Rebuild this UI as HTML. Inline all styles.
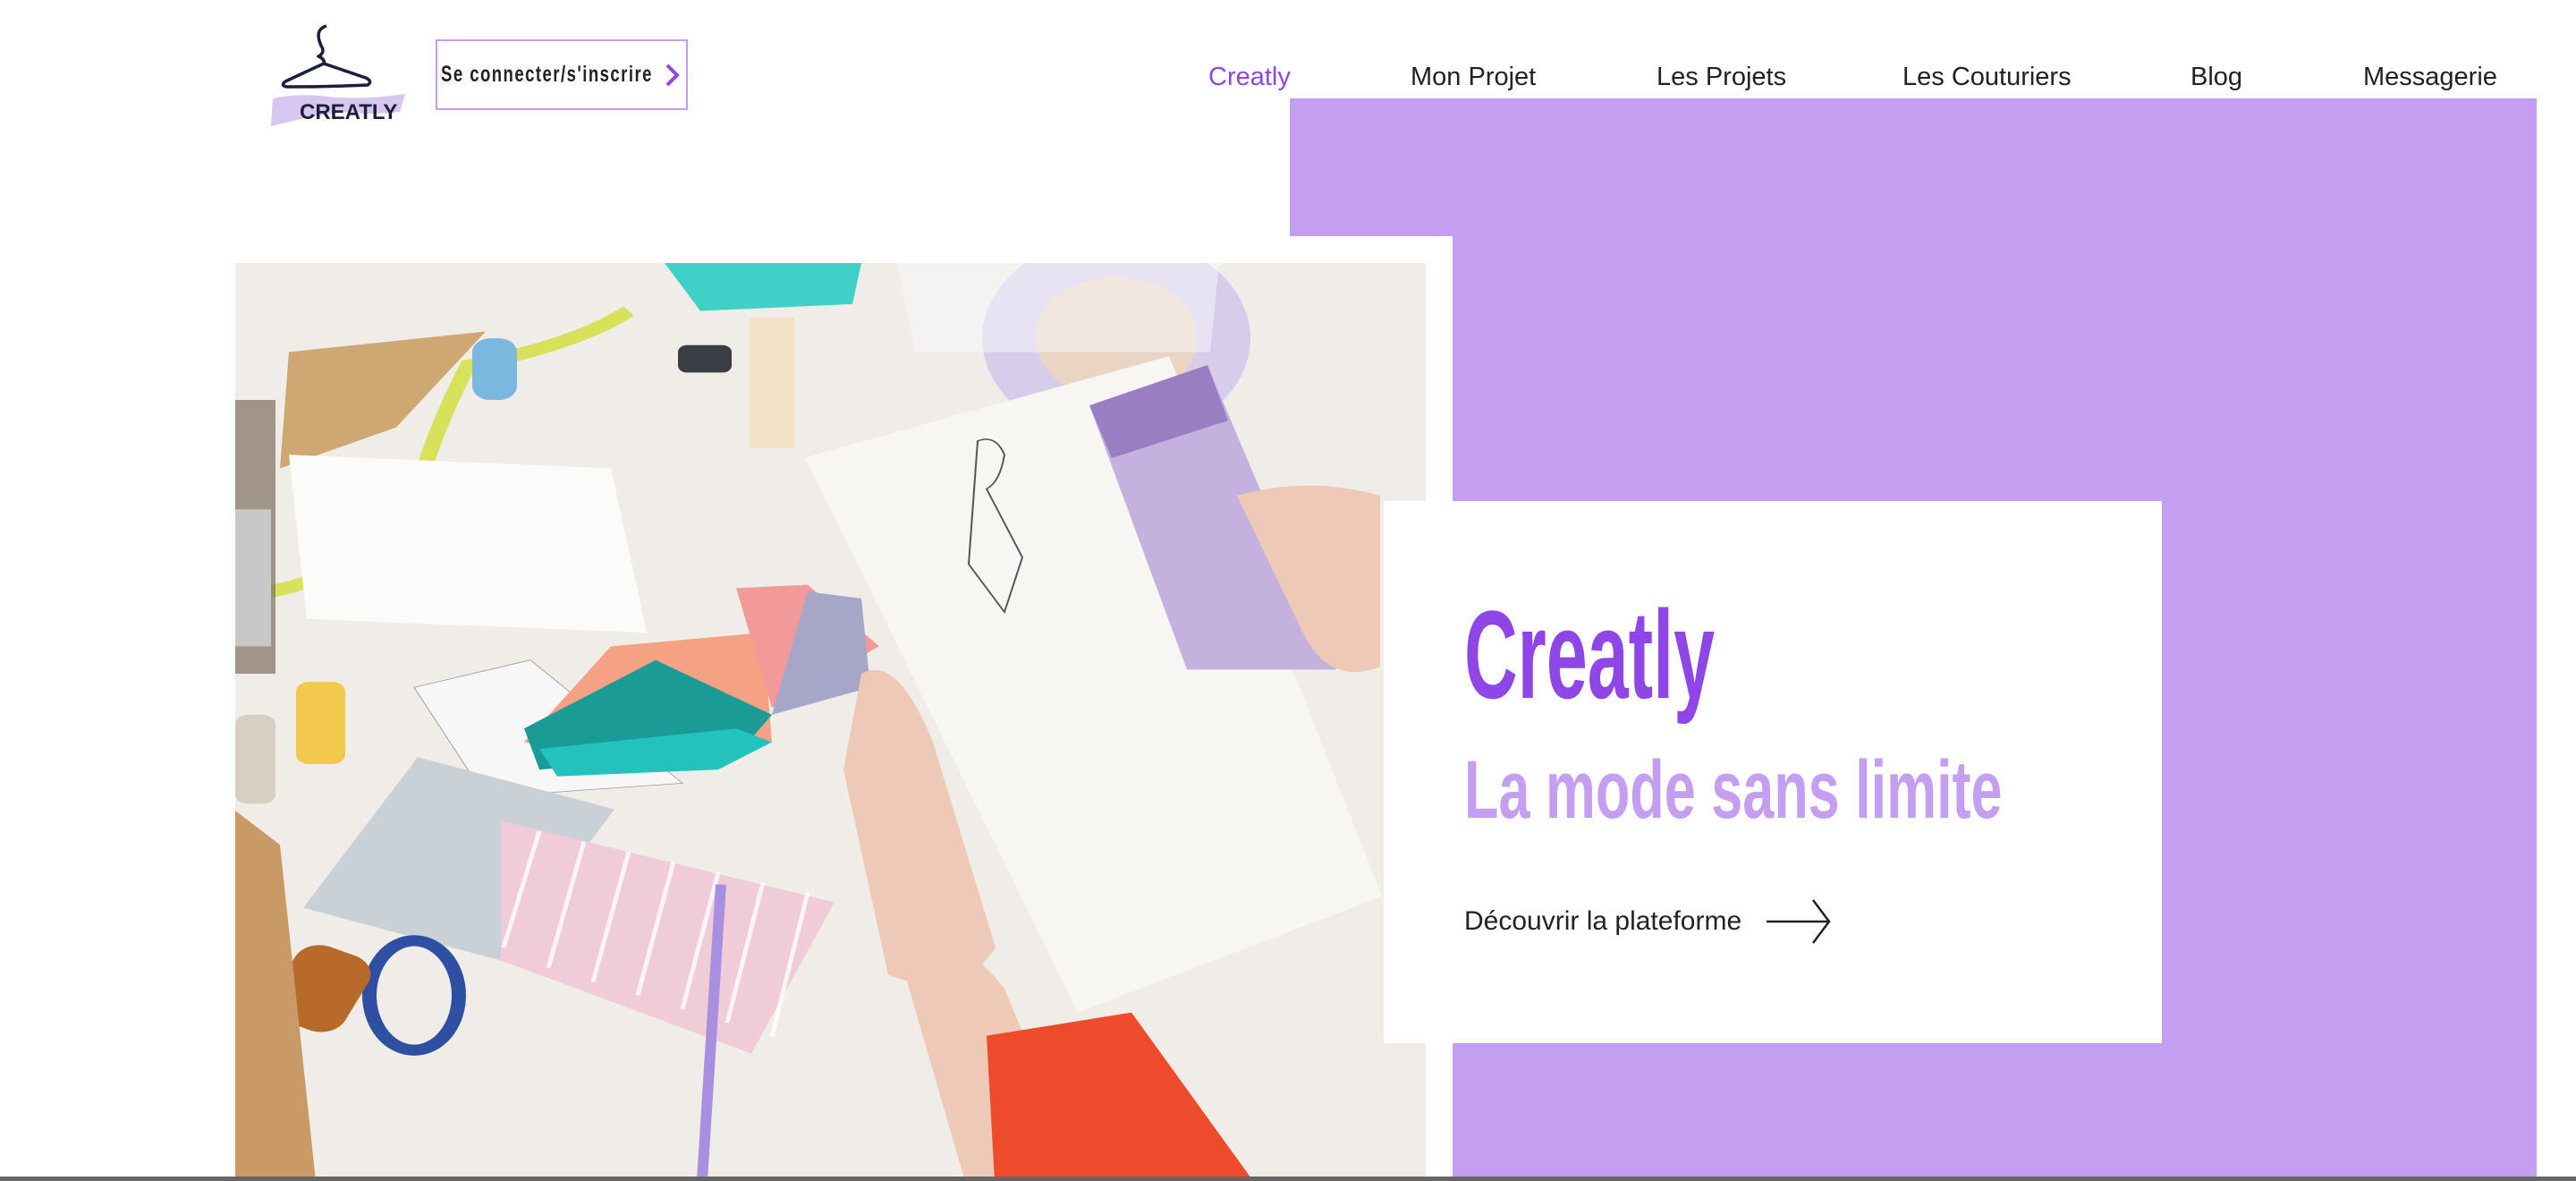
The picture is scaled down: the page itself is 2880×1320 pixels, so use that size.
<!DOCTYPE html>
<html><head><meta charset="utf-8"><style>
*{margin:0;padding:0;box-sizing:border-box}
body{width:2880px;height:1320px;overflow:hidden;background:#fff;position:relative;font-family:"Liberation Sans",sans-serif}
.abs{position:absolute}
.nav{position:absolute;top:70px;font-size:29px;color:#222;white-space:nowrap}
.cond{font-family:"Liberation Sans Narrow","Liberation Sans",sans-serif;font-weight:bold;display:inline-block;transform-origin:0 0;white-space:nowrap;line-height:1}
</style></head><body>
<div class="abs" style="left:1442px;top:110px;width:1394px;height:1210px;background:#c39ef1"></div>
<div class="abs" style="left:1442px;top:264px;width:182px;height:1056px;background:#fff"></div>
<div class="abs" style="left:263px;top:294px;width:1331px;height:1026px;overflow:hidden;background:#eeebe5">
<svg width="1331" height="1026" viewBox="0 0 1331 1026">
<rect width="1331" height="1026" fill="#f0ede8"/>
<g transform="scale(1,0.765)">
<polygon points="480,0 700,0 690,60 520,70" fill="#3fd0c8"/>
<circle cx="985" cy="110" r="150" fill="#cfc4ea" opacity=".8"/>
<circle cx="985" cy="110" r="90" fill="#f2d9b4" opacity=".7"/>
<polygon points="740,0 1100,0 1090,130 760,130" fill="#fafafa" opacity=".5"/>
<polygon points="60,130 280,100 180,240 50,300" fill="#c99a5e" opacity=".85"/>
<path d="M440 70 Q380 120 260 150 Q220 250 200 350 Q150 450 40 480" stroke="#d7e25a" stroke-width="18" fill="none"/>
<rect x="265" y="110" width="50" height="90" rx="20" fill="#7ab8e0"/>
<rect x="495" y="120" width="60" height="40" rx="10" fill="#3a3d44"/>
<rect x="575" y="80" width="50" height="190" fill="#f3e2c6"/>
<polygon points="60,280 420,300 460,540 80,520" fill="#fbfbfa"/>
<rect x="0" y="200" width="45" height="400" fill="#6b5a48" opacity=".6"/>
<rect x="0" y="360" width="40" height="200" fill="#c8c8c8"/>
<polygon points="200,620 330,580 500,760 280,780" fill="#f7f7f7" stroke="#999" stroke-width="1"/>
<polygon points="323,700 420,560 590,540 600,700 480,740" fill="#f4a184"/>
<polygon points="323,680 470,580 600,660 560,720 340,740" fill="#1b9b96"/>
<polygon points="340,710 560,680 600,700 540,740 360,750" fill="#23c2bd"/>
<polygon points="560,475 640,470 720,560 600,650" fill="#f29a9a"/>
<polygon points="640,480 700,490 710,620 600,660" fill="#a6a6c8"/>
<rect x="68" y="612" width="55" height="120" rx="14" fill="#f2c94c"/>
<rect x="0" y="660" width="45" height="130" rx="14" fill="#d6cfc2"/>
<polygon points="76,942 204,722 424,798 297,1019" fill="#c9d1d6"/>
<polygon points="297,815 670,934 577,1155 297,1019" fill="#f0ccd9"/>
<g stroke="#fff" stroke-width="5" opacity=".8"><path d="M340 830 L300 1000"/><path d="M390 845 L350 1030"/><path d="M440 860 L400 1050"/><path d="M490 875 L450 1070"/><path d="M540 890 L500 1090"/><path d="M590 905 L550 1110"/><path d="M640 920 L600 1130"/></g>
<ellipse cx="200" cy="1070" rx="50" ry="80" fill="none" stroke="#2f4fa3" stroke-width="16"/>
<rect x="50" y="1000" width="90" height="120" rx="30" fill="#b86a2a" transform="rotate(25 95 1060)"/>
<polygon points="0,800 50,850 90,1341 0,1341" fill="#c99a66"/>
<line x1="543" y1="908" x2="522" y2="1341" stroke="#a98fe0" stroke-width="12"/>
<polygon points="637,284 1044,136 1282,925 942,1095" fill="#f7f6f3"/>
<polygon points="955,208 1087,149 1231,594 1064,594" fill="#c4b1de"/>
<polygon points="955,208 1087,149 1110,230 980,285" fill="#9a7ec2"/>
<path d="M830 260 q20 -10 30 20 q-5 40 -20 50 l40 100 l-20 80 l-40 -70 z" fill="none" stroke="#555" stroke-width="2"/>
<path d="M1120 340 q80 -30 160 0 l0 250 q-60 30 -90 -60 z" fill="#efc9b7"/>
<path d="M700 600 q40 -30 80 100 l70 300 q-40 80 -120 40 l-50 -300 z" fill="#efc9b7"/>
<path d="M740 1000 q60 -40 120 60 l80 250 l-120 50 z" fill="#efc9b7"/>
<polygon points="840,1129 1002,1095 1138,1341 849,1341" fill="#ee4a2c"/>
</g>
</svg>
</div>
<div class="abs" style="left:1547px;top:560px;width:870px;height:606px;background:#fff"></div>
<div class="abs" style="left:1637px;top:662px"><span class="cond" style="font-size:140px;color:#8e47e6;transform:scaleX(.59)">Creatly</span></div>
<div class="abs" style="left:1637px;top:837px"><span class="cond" style="font-size:92px;color:#c39ef1;transform:scaleX(.684)">La mode sans limite</span></div>
<div class="abs" style="left:1637px;top:1015px;font-size:30px;line-height:1;color:#222;white-space:nowrap">Découvrir la plateforme</div>
<svg class="abs" style="left:1975px;top:1002px" width="75" height="56" viewBox="0 0 75 56"><path d="M0 28 H70 M52 4 L70 28 L52 52" stroke="#222" stroke-width="2.5" fill="none"/></svg>
<div class="nav" style="left:1351px;color:#8e47e6">Creatly</div>
<div class="nav" style="left:1577px">Mon Projet</div>
<div class="nav" style="left:1852px">Les Projets</div>
<div class="nav" style="left:2127px">Les Couturiers</div>
<div class="nav" style="left:2449px">Blog</div>
<div class="nav" style="left:2642px">Messagerie</div>
<svg class="abs" style="left:295px;top:25px" width="170" height="120" viewBox="0 0 170 120">
<path d="M10 85 Q40 78 80 84 Q120 86 158 80 L152 100 Q120 104 90 100 Q50 105 8 116 Z" fill="#d7c6ef"/>
<path d="M70 4 q-14 4 -6 22 q5 8 -3 12 q8 3 6 10 M67 46 L24 66 Q18 71 26 72 Q70 72 116 70 Q122 66 114 62 Z" fill="none" stroke="#1a1f3b" stroke-width="3.5" stroke-linejoin="round"/>
<text x="40" y="108" font-family="Liberation Sans Narrow, Liberation Sans, sans-serif" font-size="24" fill="#1a1f3b" font-weight="bold">CREATLY</text>
</svg>
<div class="abs" style="left:487px;top:44px;width:282px;height:79px;border:2px solid #c39ef1"></div>
<div class="abs" style="left:493px;top:71px"><span class="cond" style="font-size:25px;color:#222;letter-spacing:2px;transform:scaleX(.74)">Se connecter/s'inscrire</span></div>
<svg class="abs" style="left:743px;top:70px" width="18" height="28" viewBox="0 0 18 28"><path d="M3 3 L14 14 L3 25" stroke="#8e47e6" stroke-width="4" fill="none"/></svg>
<div class="abs" style="left:0;top:1315px;width:2880px;height:5px;background:#666"></div>
</body></html>
